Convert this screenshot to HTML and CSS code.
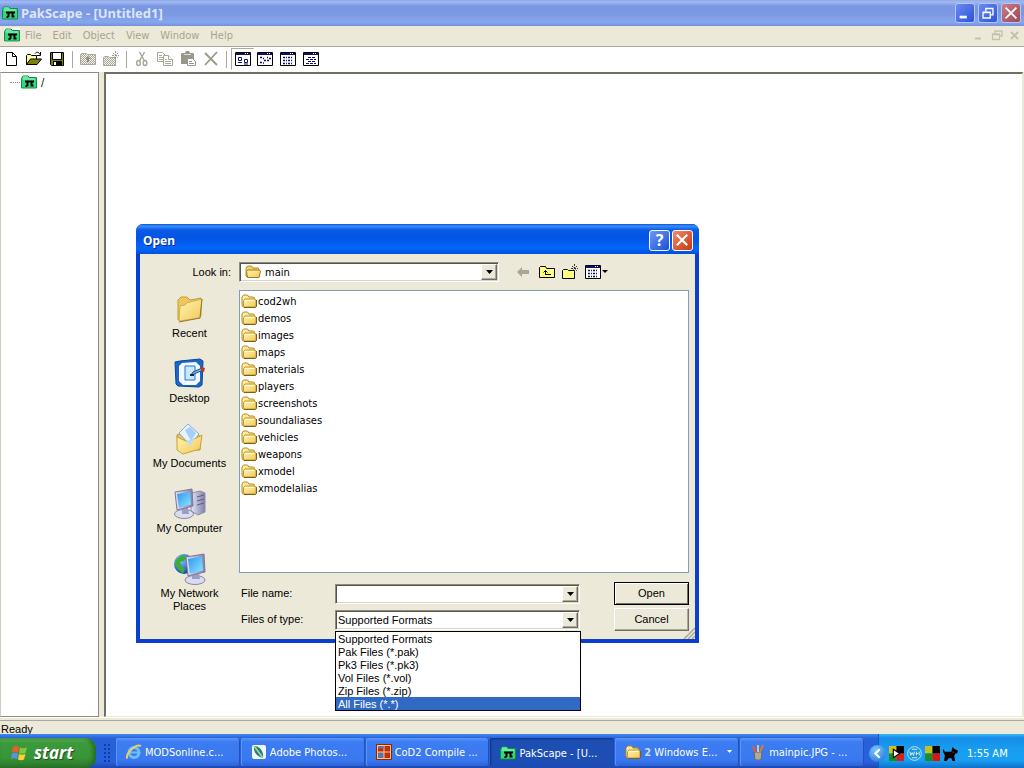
FILE: index.html
```html
<!DOCTYPE html>
<html lang="en">
<head>
<meta charset="utf-8">
<title>PakScape - [Untitled1]</title>
<link rel="stylesheet" href="styles.css">
</head>
<body>
<svg class="sprites" aria-hidden="true">
  <defs>
    <linearGradient id="gold" x1="0" y1="0" x2="1" y2="1"><stop offset="0" stop-color="#fff6b4"/><stop offset="1" stop-color="#f0c858"/></linearGradient>
    <linearGradient id="screen" x1="0" y1="0" x2="1" y2="1"><stop offset="0" stop-color="#2e96ee"/><stop offset="1" stop-color="#8fe6ff"/></linearGradient>
    <linearGradient id="metal" x1="0" y1="0" x2="1" y2="0"><stop offset="0" stop-color="#e4e4f4"/><stop offset="1" stop-color="#8080a8"/></linearGradient>
    <radialGradient id="globe" cx=".35" cy=".3" r=".75"><stop offset="0" stop-color="#8cc4ff"/><stop offset="1" stop-color="#0c3cb0"/></radialGradient>
    <pattern id="dither" width="2" height="2" patternUnits="userSpaceOnUse"><path fill="#aaa89a" d="M0 0h1v1H0zM1 1h1v1H1z"/><path fill="#f4f2ea" d="M1 0h1v1H1zM0 1h1v1H0z"/></pattern>
  </defs>
  <symbol id="pak" viewBox="0 0 16 14">
    <path d="M.5 13V3.500L2 1h5l1.500 1.500H15.500V13z" fill="#35d77c" stroke="#148a49"/>
    <path d="M2 4h12M2 2h5" stroke="#a6f5c6"/>
    <path d="M4 6.500h9M6.500 6v5M10.500 6v4.500h2M4.500 11h2" fill="none" stroke="#000" stroke-width="2"/>
  </symbol>
  <symbol id="folder" viewBox="0 0 16 14">
    <path d="M1 11V3l1.500-2h4L8 3h4.500l1 1v8l-1 1H2z" fill="url(#gold)" stroke="#b58a1c"/>
    <path d="M2.500 12V6.500L4 5h9.500L15 6v6l-1 1H3z" fill="url(#gold)" stroke="#c39a30"/>
    <path d="M4 6.500h9" stroke="#fffbd8"/>
    <path d="M15.500 6v6.500l-1 1H3" fill="none" stroke="#7c5f16"/>
  </symbol>
  <symbol id="folder-open" viewBox="0 0 16 14">
    <path d="M1 11V3l1.500-2h4L8 3h5l1 2v7H2z" fill="#f3d066" stroke="#b58a1c"/>
    <path d="M2.500 12.500L1.500 6.500 3 5h11l1.500 1-1.500 6.500z" fill="url(#gold)" stroke="#a17b1c"/>
  </symbol>
  <symbol id="new" viewBox="0 0 16 16"><path d="M3.500 1.500h6l4 4v9h-10z" fill="#fff" stroke="#000"/><path d="M9.500 1.500v4h4" fill="none" stroke="#000"/></symbol>
  <symbol id="open" viewBox="0 0 16 16">
    <path d="M.5 13.500v-9l1-1h3l1 1h5v4" fill="#ffff9a" stroke="#000"/>
    <path d="M.5 13.500l4-5.500h11l-4.500 5.500z" fill="#80800a" stroke="#000"/>
    <path d="M9 2.500c1.500-2 4-1.500 5 1M14.500 1v3.500H11" fill="none" stroke="#000"/>
  </symbol>
  <symbol id="save" viewBox="0 0 16 16"><path d="M1.500 1.500h13v13h-12l-1-1z" fill="#80800a" stroke="#000"/><path d="M4 2h8v6H4z" fill="#fff"/><path d="M3.500 2v6.500h9V2" fill="none" stroke="#000"/><path d="M4 10h9v4H4z"/><path d="M5 11h2v3H5z" fill="#fff"/></symbol>
  <symbol id="up-off" viewBox="0 0 16 16"><path d="M.5 13.500v-10l1-1h5l1 1h8v10z" fill="url(#dither)" stroke="#aaa89a"/><path d="M8 5l3 3H9v3H7V8H5z" fill="#8f8d80"/></symbol>
  <symbol id="newf-off" viewBox="0 0 16 16"><path d="M.5 14.500v-8l1-1h4l1 1h6v8z" fill="url(#dither)" stroke="#aaa89a"/><path d="M12.500 0v9M9 4.500h7M10 2l5 5M15 2l-5 5" stroke="#9a988b" stroke-dasharray="2 1"/></symbol>
  <symbol id="cut" viewBox="0 0 16 16"><path d="M5.500 1l5 9M10.500 1l-5 9" stroke="#aaa89a" stroke-width="1.500"/><ellipse cx="4.500" cy="12" rx="1.800" ry="2.500" fill="none" stroke="#aaa89a" stroke-width="1.500"/><ellipse cx="11" cy="12" rx="1.800" ry="2.500" fill="none" stroke="#aaa89a" stroke-width="1.500"/></symbol>
  <symbol id="copy" viewBox="0 0 16 16"><g fill="#fff" stroke="#aaa89a"><path d="M.5 1.500h5l3 3v6h-8z"/><path d="M6.500 4.500h5l4 4v6h-9z"/><path d="M11.500 4.500v4h4M2 4.500h3M2 6.500h4M2 8.500h4M8 8.500h2M8 10.500h6M8 12.500h6"/></g></symbol>
  <symbol id="paste" viewBox="0 0 16 16"><path d="M1 3l1-1h3l1-2h3l1 2h3l1 1v10H1z" fill="#9a988b"/><path d="M4 3.500h7" stroke="#ddd"/><path d="M7.500 7.500h5l3 3v4h-8z" fill="#fff" stroke="#9a988b"/><path d="M9 10.500h3M9 12.500h5" stroke="#9a988b"/></symbol>
  <symbol id="delete" viewBox="0 0 16 16"><path d="M2 2l12 12M14 1L2 14" stroke="#9a988b" stroke-width="1.800"/></symbol>
  <symbol id="win" viewBox="0 0 16 16"><path d="M.5 1.500h15v13H.5z" fill="#fff" stroke="#000"/><path d="M1 2h14v2H1z" fill="#10106c"/><path d="M10 2h1v1h-1zM12 2h1v1h-1z" fill="#fff"/></symbol>
  <symbol id="v-large" viewBox="0 0 16 16"><use href="#win"/><path d="M3.500 6.500h3v3h-3zM9.500 8.500h3v3h-3z" fill="#fff" stroke="#10106c"/><path d="M3 11.500h4M9 13h4" stroke="#10106c"/></symbol>
  <symbol id="v-small" viewBox="0 0 16 16"><use href="#win"/><path d="M3 6.500h2M6 7.500h1M10 6.500h1M12 7.500h2M3 11.500h2M6 12h1M7 9.500h2M10 9.500h2" stroke="#10106c" stroke-width="1.500"/></symbol>
  <symbol id="v-list" viewBox="0 0 16 16"><use href="#win"/><path d="M3 6.500h10M3 9.500h10M3 12.500h10" stroke="#10106c" stroke-width="1.500" stroke-dasharray="2 1 1 1"/></symbol>
  <symbol id="v-detail" viewBox="0 0 16 16"><use href="#win"/><path d="M5 6.500h8M3 8.500h10M5 10.500h8M3 12.500h10" stroke="#10106c" stroke-dasharray="3 1"/></symbol>
  <symbol id="back" viewBox="0 0 16 16"><path d="M1 8l5-5v3h7v4H6v3z" fill="#a9a698"/></symbol>
  <symbol id="up" viewBox="0 0 16 16"><path d="M.5 13.500v-10l1-1h5l1 2h8v9z" fill="#ffff7c" stroke="#000"/><path d="M6.500 10.500V6.500M4.500 8.500l2-2 2 2M6 10.500h6" fill="none" stroke="#000"/></symbol>
  <symbol id="newf" viewBox="0 0 16 16"><path d="M.5 14.500v-8l1-1h4l1 1h6v8z" fill="#ffff7c" stroke="#000"/><path d="M12.500 0v9M9 4.500h7M10 2l5 5M15 2l-5 5" stroke="#333" stroke-dasharray="2 1"/></symbol>
  <symbol id="down" viewBox="0 0 7 4"><path d="M0 0h7L3.500 4z"/></symbol>
  <symbol id="p-recent" viewBox="0 0 32 32"><path d="M4 27V7l3-3h6l3 3 11-2v18z" fill="#eec85c" stroke="#c29c38"/><path d="M5 28l1-15 5-1 1-2 16-4-2 19z" fill="url(#gold)" stroke="#d4ae48"/><path d="M5 29l21-4 2-19" fill="none" stroke="#94783a"/></symbol>
  <symbol id="p-desktop" viewBox="0 0 32 32"><path d="M1 4l5-1 20-2 3 2-1 24-3 2-21-1-2-2z" fill="#1c66c8" stroke="#0c468e"/><path d="M5 8l3-3 14-1 4 4v15l-4 4H9l-4-4z" fill="#f4f9ff"/><path d="M11 8h10v14H11z" fill="#cbe6ff" stroke="#1e78d8"/><path d="M17 17l2-3 9-4 1 2-9 4z" fill="#7fb6ec" stroke="#174c94"/><path d="M27 9l4 1-1 4-3-1z" fill="#c43222"/><path d="M16 17h4" stroke="#133" stroke-width="2"/></symbol>
  <symbol id="p-docs" viewBox="0 0 32 32"><path d="M3 12l4-2 19 3v14H4z" fill="#ebc254" stroke="#b9912c"/><path d="M14 1l11 10-9 11L5 10z" fill="#e6f3ff" stroke="#86add4"/><path d="M11 7l5-3 6 6-5 8z" fill="#a5cff4"/><path d="M3 14l11 5 14-7-2 14-17 5-6-4z" fill="url(#gold)" stroke="#caa03a"/><path d="M12 18l4 5 5-8z" fill="#c0dcec"/></symbol>
  <symbol id="p-computer" viewBox="0 0 32 32"><path d="M17 5l9-2 5 2v19l-7 3-7-4z" fill="url(#metal)" stroke="#8c8cb0"/><path d="M23 9l7-2M23 13l7-2M23 17l7-2" stroke="#5c5c84"/><ellipse cx="10" cy="26" rx="9.500" ry="4.500" fill="#dcdcf0" stroke="#8888a8"/><path d="M8 20h6l1 6H8z" fill="#9c9cc4"/><path d="M1 4l17-3 1 17-16 4z" fill="url(#metal)" stroke="#7878a0"/><path d="M3 6l13-2 1 12.500L5 19.500z" fill="url(#screen)"/></symbol>
  <symbol id="p-network" viewBox="0 0 32 32"><circle cx="10" cy="11" r="10" fill="url(#globe)"/><path d="M2 7l6-5 5 2-3 4-4 1 1 4 4 3-2 5-5-5-3-5z" fill="#3cae38"/><ellipse cx="21" cy="27" rx="10" ry="4.500" fill="#dcdcf0" stroke="#8888a8"/><path d="M18 20h7l1 6h-8z" fill="#9c9cc4"/><path d="M12 4l18-3 1 18-17 4z" fill="url(#metal)" stroke="#7878a0"/><path d="M14 6l14-2.500 1 14L16 20.500z" fill="url(#screen)"/></symbol>
</svg>

<header class="titlebar">
  <svg class="ic16"><use href="#pak"/></svg>
  <h1 class="titlebar-text">PakScape - [Untitled1]</h1>
  <button class="cap" aria-label="Minimize"><svg viewBox="0 0 20 20"><path d="M4 13h8v3H4z" fill="#fff"/></svg></button>
  <button class="cap" aria-label="Restore"><svg viewBox="0 0 20 20"><path d="M7.500 8V5h8v7H13M7 5h9M4.500 9h8v6.500h-8zM4 9.500h9" fill="none" stroke="#fff" stroke-width="1.500"/></svg></button>
  <button class="cap cap-close" aria-label="Close"><svg viewBox="0 0 20 20"><path d="M4 4l12 12M16 4L4 16" stroke="#fff" stroke-width="2"/></svg></button>
</header>

<nav class="menubar">
  <svg class="ic16 menubar-icon"><use href="#pak"/></svg>
  <button class="menu">File</button><button class="menu">Edit</button><button class="menu">Object</button><button class="menu">View</button><button class="menu">Window</button><button class="menu">Help</button>
  <span class="mdi">
    <button class="mdi-btn" aria-label="Minimize document"><svg viewBox="0 0 12 12"><path d="M2 9.500h6" stroke="#c4c1ae" stroke-width="2"/></svg></button>
    <button class="mdi-btn" aria-label="Restore document"><svg viewBox="0 0 12 12"><path d="M4 4V2h7v5H9M4 2h7M1.500 5h7v5.500h-7zM1 5.500h8" fill="none" stroke="#c4c1ae" stroke-width="1.300"/></svg></button>
    <button class="mdi-btn" aria-label="Close document"><svg viewBox="0 0 12 12"><path d="M2 3l7 7M9 3l-7 7" stroke="#c4c1ae" stroke-width="2"/></svg></button>
  </span>
</nav>

<div class="toolbar">
  <button class="tool" aria-label="New"><svg><use href="#new"/></svg></button>
  <button class="tool" aria-label="Open"><svg><use href="#open"/></svg></button>
  <button class="tool" aria-label="Save"><svg><use href="#save"/></svg></button>
  <span class="sep"></span>
  <button class="tool" aria-label="Up one level"><svg><use href="#up-off"/></svg></button>
  <button class="tool" aria-label="New folder"><svg><use href="#newf-off"/></svg></button>
  <span class="sep"></span>
  <button class="tool" aria-label="Cut"><svg><use href="#cut"/></svg></button>
  <button class="tool" aria-label="Copy"><svg><use href="#copy"/></svg></button>
  <button class="tool" aria-label="Paste"><svg><use href="#paste"/></svg></button>
  <button class="tool" aria-label="Delete"><svg><use href="#delete"/></svg></button>
  <span class="sep"></span>
  <button class="tool tool-on" aria-label="Large icons"><svg><use href="#v-large"/></svg></button>
  <button class="tool" aria-label="Small icons"><svg><use href="#v-small"/></svg></button>
  <button class="tool" aria-label="List"><svg><use href="#v-list"/></svg></button>
  <button class="tool" aria-label="Details"><svg><use href="#v-detail"/></svg></button>
</div>

<main class="workspace">
  <aside class="tree"><div class="tree-item"><span class="tree-line"></span><svg class="ic16"><use href="#pak"/></svg><span>/</span></div></aside>
  <section class="files"></section>
</main>
<footer class="status">Ready</footer>

<div class="taskbar">
  <button class="start">
    <svg viewBox="0 0 18 18"><path d="M2 3c2-1.500 4-1.500 6 0L7 8.500c-2-1-4-1-6 0z" fill="#f0592a"/><path d="M9 3.500c2 1 4 1 7 0L14.500 9C12 10 10 10 8 9z" fill="#86c440"/><path d="M1 9.500c2-1 4-1 6 0L6 15c-2-1-4-1-6 0z" fill="#5a8ef0"/><path d="M8 10c2 1 4 1 6.500 0L13 15.500c-2 1-4 1-6 0z" fill="#fcd032"/></svg>
    start
  </button>
  <span class="grip"></span>
  <div class="tasks">
    <button class="task"><svg viewBox="0 0 16 16"><circle cx="8" cy="8.500" r="5" fill="none" stroke="#6cc0ff" stroke-width="3"/><path d="M4 8.500h8" stroke="#6cc0ff" stroke-width="2"/><path d="M1.500 14.500C-1 11 9-1 15 2" fill="none" stroke="#f2cc58" stroke-width="2"/></svg><span class="task-text">MODSonline.c...</span></button>
    <button class="task"><svg viewBox="0 0 16 16"><rect x="1" y="1" width="14" height="14" rx="2" fill="#f5f8fc"/><path d="M3 2c6 0 10 6 9 12C6 13 2 8 3 2z" fill="#2a7a94"/><path d="M3 2l9 12" stroke="#a8e070" stroke-width="1.500"/></svg><span class="task-text">Adobe Photos...</span></button>
    <button class="task"><svg viewBox="0 0 16 16"><path d="M0 0h16v16H0z" fill="#a81814"/><path d="M1 1h14v14H1z" fill="#f6d860"/><path d="M2 2h5.500v5.500H2zM8.500 8.500H14V14H8.500z" fill="#c4281c"/><path d="M8.500 2H14v5.500H8.500z" fill="#c4281c"/><path d="M2 8.500h5.500V14H2z" fill="#6470b4"/><path d="M2 2h5.500v2.500H2z" fill="#6470b4"/></svg><span class="task-text">CoD2 Compile ...</span></button>
    <button class="task task-on"><svg><use href="#pak"/></svg><span class="task-text">PakScape - [U...</span></button>
    <button class="task"><svg><use href="#folder"/></svg><span class="task-text"><b class="count">2</b> Windows E...</span><svg class="task-more" viewBox="0 0 7 4"><path d="M1 0h5L3.500 3z" fill="#fff"/></svg></button>
    <button class="task"><svg viewBox="0 0 16 16"><path d="M4 8h8l-1 8H5z" fill="#b0a89c" stroke="#6c645c"/><path d="M5 8L3 2" stroke="#e0602c" stroke-width="2"/><path d="M8 8V1" stroke="#d8c49c" stroke-width="2"/><path d="M10 8l3-7" stroke="#c88438" stroke-width="2"/></svg><span class="task-text">mainpic.JPG - ...</span></button>
  </div>
  <div class="tray">
    <button class="tray-toggle" aria-label="Show hidden icons"><svg viewBox="0 0 16 16"><path d="M10 4L6 8l4 4" fill="none" stroke="#fff" stroke-width="2"/></svg></button>
    <svg class="tray-icon" viewBox="0 0 14 14"><path d="M0 0h7v7H0z" fill="#d8c01c"/><path d="M7 0h7v7H7z"/><path d="M0 7h7v7H0z" fill="#1c8c28"/><path d="M7 7h7v7H7z" fill="#d82018"/><path d="M4 3l6 4-6 4z" fill="#fff" stroke="#000"/></svg>
    <svg class="tray-icon" viewBox="0 0 16 16"><circle cx="8" cy="8" r="7.300" fill="#1d93dc" stroke="#bfeaff"/><path d="M3 6l1 4 1.500-3L7 10l1-4M10 6v4M10 8h2M13 6v4M5 3.500h6M5 12.500h6" fill="none" stroke="#d8f4ff"/></svg>
    <svg class="tray-icon" viewBox="0 0 14 14"><path d="M0 0h7v7H0z" fill="#c8c01c"/><path d="M7 0h7v7H7z"/><path d="M0 7h7v7H0z" fill="#1c8c28"/><path d="M7 7h7v7H7z" fill="#d81810"/></svg>
    <svg class="tray-icon" viewBox="0 0 16 16"><path d="M0 3l2 3h7l1-5 2 2 4 2-1 3h-2l-1 3 1 5h-3l-1-3H6l-2 3H1l1-6-2-4z"/><path d="M10 6.500h2" stroke="#d82018"/></svg>
    <time class="clock">1:55 AM</time>
  </div>
</div>

<div class="dialog" role="dialog" aria-labelledby="dlg-title">
  <div class="dialog-title">
    <h2 class="dialog-name" id="dlg-title">Open</h2>
    <button class="dcap" aria-label="Help">?</button>
    <button class="dcap dcap-close" aria-label="Close"><svg viewBox="0 0 20 20"><path d="M4 4l11 11M15 4L4 15" stroke="#fff" stroke-width="2.200"/></svg></button>
  </div>
  <form class="dialog-body">
    <label class="lookin-label" for="lookin">Look in:</label>
    <div class="lookin-row">
      <div class="combo lookin"><svg class="ic16 lookin-icon"><use href="#folder-open"/></svg><select class="combo-field tahoma" id="lookin"><option>main</option></select><span class="combo-arrow"><svg><use href="#down"/></svg></span></div>
      <div class="nav-tools">
        <button type="button" class="nav-tool" aria-label="Back"><svg><use href="#back"/></svg></button>
        <button type="button" class="nav-tool" aria-label="Up One Level"><svg><use href="#up"/></svg></button>
        <button type="button" class="nav-tool" aria-label="Create New Folder"><svg><use href="#newf"/></svg></button>
        <button type="button" class="nav-tool nav-wide" aria-label="View Menu"><svg><use href="#v-list"/></svg><svg class="nav-more" viewBox="0 0 7 4"><path d="M1 0h6L4 3z"/></svg></button>
      </div>
    </div>
    <div class="places">
      <button type="button" class="place"><svg><use href="#p-recent"/></svg>Recent</button>
      <button type="button" class="place"><svg><use href="#p-desktop"/></svg>Desktop</button>
      <button type="button" class="place"><svg><use href="#p-docs"/></svg>My Documents</button>
      <button type="button" class="place"><svg><use href="#p-computer"/></svg>My Computer</button>
      <button type="button" class="place"><svg><use href="#p-network"/></svg>My Network<br>Places</button>
    </div>
    <ul class="listing tahoma">
      <li class="entry"><svg class="ic16"><use href="#folder"/></svg>cod2wh</li>
      <li class="entry"><svg class="ic16"><use href="#folder"/></svg>demos</li>
      <li class="entry"><svg class="ic16"><use href="#folder"/></svg>images</li>
      <li class="entry"><svg class="ic16"><use href="#folder"/></svg>maps</li>
      <li class="entry"><svg class="ic16"><use href="#folder"/></svg>materials</li>
      <li class="entry"><svg class="ic16"><use href="#folder"/></svg>players</li>
      <li class="entry"><svg class="ic16"><use href="#folder"/></svg>screenshots</li>
      <li class="entry"><svg class="ic16"><use href="#folder"/></svg>soundaliases</li>
      <li class="entry"><svg class="ic16"><use href="#folder"/></svg>vehicles</li>
      <li class="entry"><svg class="ic16"><use href="#folder"/></svg>weapons</li>
      <li class="entry"><svg class="ic16"><use href="#folder"/></svg>xmodel</li>
      <li class="entry"><svg class="ic16"><use href="#folder"/></svg>xmodelalias</li>
    </ul>
    <div class="fields">
      <label for="fname">File name:</label>
      <div class="combo"><input class="combo-field" id="fname" type="text"><span class="combo-arrow"><svg><use href="#down"/></svg></span></div>
      <button type="submit" class="push push-default">Open</button>
      <label for="ftype">Files of type:</label>
      <div class="combo">
        <select class="combo-field" id="ftype"><option>Supported Formats</option></select><span class="combo-arrow"><svg><use href="#down"/></svg></span>
        <ul class="droplist" role="listbox" aria-label="Files of type">
          <li role="option">Supported Formats</li><li role="option">Pak Files (*.pak)</li><li role="option">Pk3 Files (*.pk3)</li><li role="option">Vol Files (*.vol)</li><li role="option">Zip Files (*.zip)</li><li role="option" class="picked" aria-selected="true">All Files (*.*)</li>
        </ul>
      </div>
      <button type="button" class="push">Cancel</button>
    </div>
    <svg class="sizer" viewBox="0 0 12 12"><path d="M1 12L12 1M5 12l7-7M9 12l3-3" stroke="#aca899" stroke-width="1.500"/></svg>
  </form>
</div>
</body>
</html>
```
FILE: styles.css
```css
* { box-sizing: border-box; }
body {
  margin: 0;
  height: 100vh;
  display: flex;
  flex-direction: column;
  overflow: hidden;
  background: #fff;
  color: #000;
  font: 11px/13px "DejaVu Sans Condensed", "Noto Sans", sans-serif;
}
button { margin: 0; padding: 0; border: 0; background: none; font: inherit; color: inherit; }
h1, h2, ul { margin: 0; padding: 0; list-style: none; }
svg { display: block; flex: none; }
.sprites { position: absolute; width: 0; height: 0; }
.tahoma { font-family: "DejaVu Sans Condensed", "Noto Sans", sans-serif; }
.ic16 { width: 16px; height: 14px; }

.titlebar {
  display: flex;
  align-items: center;
  gap: 3px;
  height: 26px;
  padding: 0 3px 0 2px;
  background: linear-gradient(#8fa9ea 0, #a2baf2 2px, #7b98e2 6px, #7b98e2 14px, #86a8ee 22px, #7590dc 26px);
}
.titlebar-text { flex: 1; font: bold 13px/18px "Noto Sans", sans-serif; color: #dbe6fc; }
.cap { width: 20px; height: 20px; border: 1px solid #b4c6f4; border-radius: 3px; background: linear-gradient(135deg, #6a8cf0, #2c52d8); }
.cap-close { background: linear-gradient(135deg, #c87c86, #a04858); }
.cap svg { width: 18px; height: 18px; }

.menubar { display: flex; align-items: center; height: 21px; padding: 0 0 2px 4px; background: #ece9d8; border-bottom: 1px solid #aca899; color: #a7a491; }
.menubar-icon { background: #fff; }
.menu { padding: 0 6px 0 5px; }
.mdi { display: flex; gap: 6px; margin-left: auto; padding-right: 3px; }
.mdi-btn { width: 12px; height: 12px; }

.toolbar { display: flex; align-items: center; height: 25px; padding-bottom: 1px; }
.tool { display: flex; justify-content: flex-start; align-items: center; width: 23px; height: 22px; padding-left: 3px; }
.tool svg { width: 16px; height: 16px; }
.tool-on { border: 1px solid #fff; border-top-color: #aca899; border-left-color: #aca899; }
.sep { width: 1px; height: 17px; margin: 0 4px 0 3px; background: #aca899; }

.workspace { flex: 1; display: flex; min-height: 0; background: #ece9d8; }
.tree { width: 99px; background: #fff; border: 1px solid #8f8d80; border-left-color: #d0cdc0; }
.tree-item { display: flex; align-items: center; gap: 4px; padding: 2px 0 0 9px; }
.tree-item .ic16 { margin-left: -3px; }
.tree-line { width: 10px; border-top: 1px dotted #999; }
.files { flex: 1; margin: 0 1px 0 5px; background: #fff; border: 2px solid #716f64; border-right: 1px solid #ece9d8; border-bottom: 1px solid #ece9d8; }
.status { height: 17px; padding: 5px 1px 0; background: #ece9d8; border-top: 1px solid #fff; box-shadow: inset 0 2px 0 #ece9d8, inset 0 3px 0 #aca899; font-family: "Liberation Sans", sans-serif; }

.taskbar { display: flex; height: 34px; background: linear-gradient(#3f8cf3 0, #2a62d8 4px, #2660da 8px, #2861de 28px, #1d46ae 34px); color: #fff; }
.start { display: flex; align-items: center; gap: 5px; width: 96px; margin-top: 4px; padding-left: 11px; border-radius: 0 10px 10px 0; background: linear-gradient(#5fb45f 0, #3c9a3c 5px, #379537 20px, #2a742a 30px); box-shadow: inset -3px 0 4px #256c25; font: italic bold 17px/24px "Open Sans", sans-serif; text-shadow: 1px 1px 1px #1c4c1c; }
.start svg { width: 18px; height: 18px; }
.grip { width: 6px; margin: 10px 6px 6px 8px; background: radial-gradient(circle at 1px 1px, #163c9c 1px, transparent 1px) 0 0 / 4px 4px; }
.tasks { flex: 1; display: flex; gap: 1px; min-width: 0; padding: 4px 0 2px; }
.task { flex: 1 1 0; min-width: 0; display: flex; align-items: center; gap: 3px; padding: 0 6px 0 10px; border-radius: 2px; background: linear-gradient(#5c94f8 0, #3c7cf2 4px, #3a78f0 22px, #2c64d8 28px); box-shadow: inset -1px 0 0 #2450b8, inset 1px 0 0 #5a92f6; text-align: left; }
.task svg { width: 16px; height: 16px; }
.task .task-more { width: 7px; height: 4px; }
.task-on { padding: 2px 6px 0 10px; background: #1d4eb4; box-shadow: inset 1px 1px 2px #123482; }
.task-text { flex: 1; white-space: nowrap; overflow: hidden; }
.count { color: #cfdcf4; }
.tray { display: flex; align-items: center; gap: 3px; width: 156px; margin-left: 4px; padding: 4px 0 0 1px; background: linear-gradient(90deg, #2660da00 10px, #0c5cbc 10px, #0c5cbc 11px, #2660da00 11px), linear-gradient(#3cb4fa 0, #148ce8 4px, #189cf0 14px, #18a0f4 26px, #1070c8 34px) 10px 0 / 100% 100% no-repeat; }
.tray-toggle { width: 17px; height: 17px; border-radius: 50%; background: radial-gradient(circle at 40% 30%, #7cc8fc, #1c68d8); }
.tray-toggle svg { width: 17px; height: 17px; }
.tray-icon { width: 15px; height: 15px; }
.clock { margin-left: 6px; white-space: nowrap; }

.dialog { position: absolute; left: 136px; top: 224px; width: 563px; border: 4px solid #0c3ed0; border-top: 0; border-radius: 7px 7px 0 0; background: #ece9d8; font-family: "Liberation Sans", sans-serif; }
.dialog-title { display: flex; align-items: center; gap: 2px; height: 30px; margin: 0 -4px; padding: 3px 6px 0 7px; border-radius: 7px 7px 0 0; background: linear-gradient(#0a50d0 0, #3a90fc 2px, #0a5ae6 6px, #0254e4 14px, #0466fc 24px, #0050dc 30px); }
.dialog-name { flex: 1; padding-top: 1px; font: bold 12px/16px "Noto Sans", sans-serif; color: #fff; text-shadow: 1px 1px 0 #0c2c8c; }
.dcap { width: 21px; height: 21px; border: 1px solid #fff; border-radius: 3px; background: linear-gradient(135deg, #6c98f8, #1c50d4); font: bold 16px/19px "Noto Sans", sans-serif; color: #fff; }
.dcap-close { background: linear-gradient(135deg, #f08c68, #c83410); }
.dcap svg { width: 19px; height: 19px; }

.dialog-body { position: relative; display: grid; grid-template-columns: 99px 1fr; grid-template-rows: 20px 283px auto; row-gap: 8px; padding: 8px 6px 8px 0; }
.lookin-label { padding-right: 8px; text-align: right; align-self: center; }
.lookin-row { display: flex; gap: 17px; align-items: center; }
.lookin { width: 260px; }
.combo { position: relative; display: flex; height: 20px; background: #fff; border: 1px solid #fff; border-top-color: #8f8d80; border-left-color: #8f8d80; box-shadow: inset 1px 1px 0 #555349, inset -1px -1px 0 #d8d5c6; }
.combo-field { flex: 1; min-width: 0; margin: 0; padding: 1px 0 0 2px; border: 0; outline: 0; appearance: none; background: none; color: #000; font-size: 11px; line-height: 16px; }
.combo-field.tahoma { padding-left: 4px; }
.combo-field:not(.tahoma) { font-family: "Liberation Sans", sans-serif; }
.lookin-icon { margin: 2px 0 0 5px; }
.combo-arrow { display: flex; align-items: center; justify-content: center; width: 16px; margin: 1px; background: #ece9d8; border: 1px solid #fff; border-right-color: #716f64; border-bottom-color: #716f64; box-shadow: inset -1px -1px 0 #aca899; pointer-events: none; }
.combo-arrow svg { width: 7px; height: 4px; }
.nav-tools { display: flex; }
.nav-tool { display: flex; align-items: center; width: 23px; height: 20px; }
.nav-tool svg { width: 16px; height: 16px; }
.nav-wide { width: 30px; }
.nav-tool .nav-more { width: 7px; height: 4px; }

.places { grid-column: 1; grid-row: 2 / span 2; display: flex; flex-direction: column; padding-top: 3px; }
.place { display: flex; flex-direction: column; align-items: center; gap: 2px; height: 65px; }
.place svg { width: 32px; height: 32px; flex: none; }
.listing { padding: 2px 1px; background: #fff; border: 1px solid #7f9db9; }
.entry { display: flex; align-items: center; gap: 1px; height: 17px; }
.entry .ic16 { margin-bottom: 1px; }
.fields { display: grid; grid-template-columns: 94px 245px 1fr; grid-template-rows: 23px 23px; row-gap: 3px; align-items: center; margin-top: 1px; padding-left: 2px; }
.push { justify-self: end; width: 75px; height: 23px; background: #ece9d8; border: 1px solid #fff; border-right-color: #716f64; border-bottom-color: #716f64; box-shadow: inset -1px -1px 0 #aca899; }
.push-default { border-color: #000; box-shadow: inset 1px 1px 0 #fff, inset -1px -1px 0 #716f64; }
.droplist { position: absolute; left: -1px; top: 20px; width: 246px; background: #fff; border: 1px solid #000; z-index: 2; }
.droplist li { padding: 1px 0 0 2px; height: 13px; line-height: 12px; }
.droplist .picked { background: #316ac5; color: #fff; }
.sizer { position: absolute; right: 0; bottom: 0; width: 12px; height: 12px; }
```
